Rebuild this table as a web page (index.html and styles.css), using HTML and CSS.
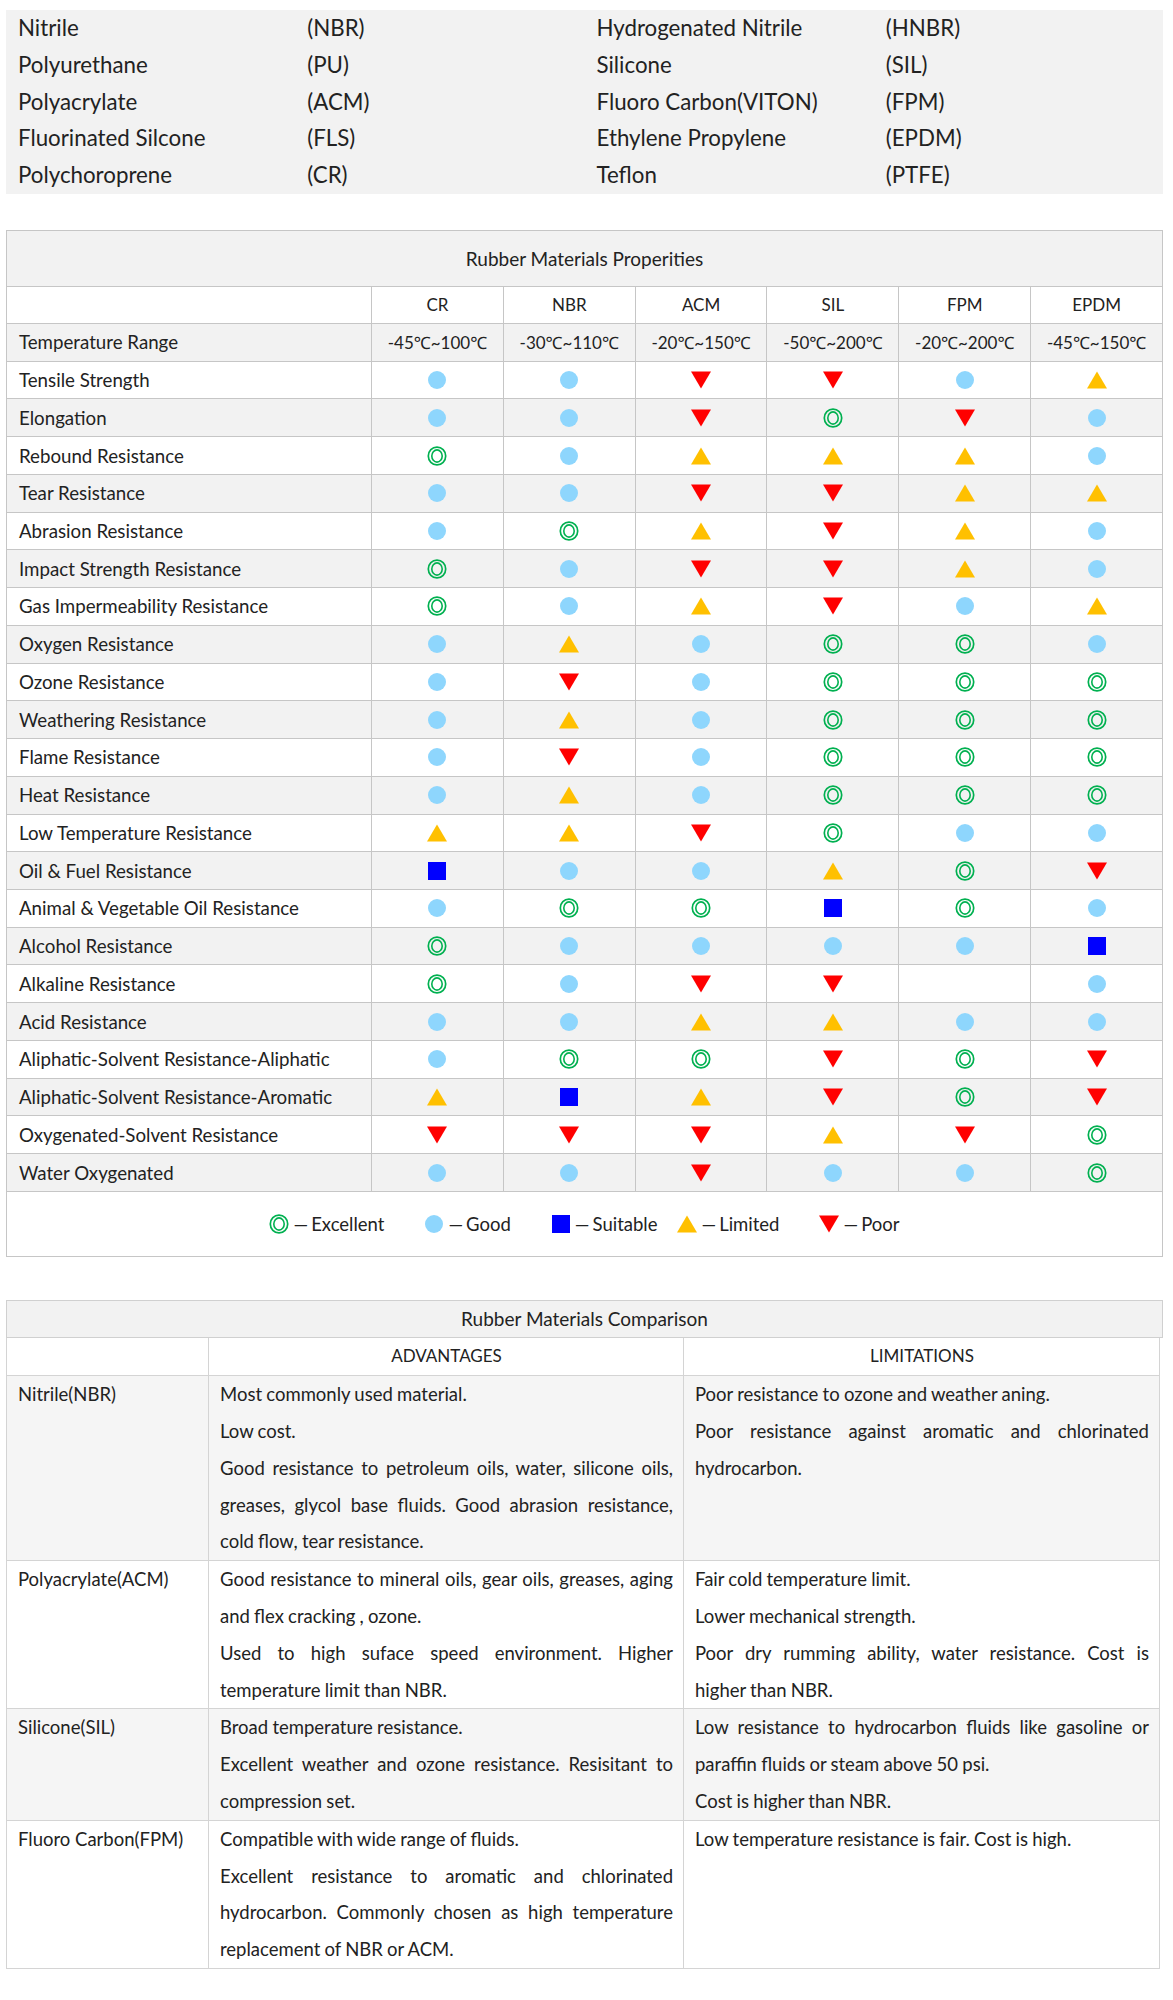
FILE: index.html
```html
<!DOCTYPE html>
<html lang="en">
<head>
<meta charset="utf-8">
<title>Rubber Materials</title>
<link rel="stylesheet" href="styles.css">
</head>
<body>
<svg class="defs" width="0" height="0" aria-hidden="true">
  <defs>
    <symbol id="i-exc" viewBox="0 0 20 20">
      <ellipse cx="10" cy="10" rx="8.7" ry="8.9" fill="none" stroke="#00b050" stroke-width="1.7"/>
      <ellipse cx="10" cy="10" rx="5.2" ry="6.1" fill="none" stroke="#00b050" stroke-width="1.6"/>
    </symbol>
    <symbol id="i-good" viewBox="0 0 20 20">
      <circle cx="10" cy="10" r="9" fill="#8ed6fd"/>
    </symbol>
    <symbol id="i-suit" viewBox="0 0 20 20">
      <rect x="1" y="1" width="18" height="18" fill="#0000ff"/>
    </symbol>
    <symbol id="i-lim" viewBox="0 0 20 20">
      <polygon points="10,1.5 20,18.5 0,18.5" fill="#ffc000"/>
    </symbol>
    <symbol id="i-poor" viewBox="0 0 20 20">
      <polygon points="0,1.5 20,1.5 10,18.5" fill="#ff0000"/>
    </symbol>
  </defs>
</svg>

<div class="page">
  <div class="abbr">
    <div class="abbr-cell">Nitrile</div><div class="abbr-cell">(NBR)</div><div class="abbr-cell">Hydrogenated Nitrile</div><div class="abbr-cell">(HNBR)</div>
    <div class="abbr-cell">Polyurethane</div><div class="abbr-cell">(PU)</div><div class="abbr-cell">Silicone</div><div class="abbr-cell">(SIL)</div>
    <div class="abbr-cell">Polyacrylate</div><div class="abbr-cell">(ACM)</div><div class="abbr-cell">Fluoro Carbon(VITON)</div><div class="abbr-cell">(FPM)</div>
    <div class="abbr-cell">Fluorinated Silcone</div><div class="abbr-cell">(FLS)</div><div class="abbr-cell">Ethylene Propylene</div><div class="abbr-cell">(EPDM)</div>
    <div class="abbr-cell">Polychoroprene</div><div class="abbr-cell">(CR)</div><div class="abbr-cell">Teflon</div><div class="abbr-cell">(PTFE)</div>
  </div>

  <table class="props">
    <colgroup><col class="c-label"><col><col><col><col><col><col></colgroup>
    <tr class="r-title"><td colspan="7">Rubber Materials Properities</td></tr>
    <tr class="r-head"><td></td><td>CR</td><td>NBR</td><td>ACM</td><td>SIL</td><td>FPM</td><td>EPDM</td></tr>
    <tr class="r-data alt r-temp"><td class="lbl">Temperature Range</td><td>-45℃~100℃</td><td>-30℃~110℃</td><td>-20℃~150℃</td><td>-50℃~200℃</td><td>-20℃~200℃</td><td>-45℃~150℃</td></tr>
    <tbody id="prop-body"></tbody>
  </table>
  <table class="legend-table">
    <tr><td>
      <div class="legend">
        <span class="lg-item"><svg class="ic"><use href="#i-exc"/></svg><span class="dash">—</span>Excellent</span>
        <span class="lg-item"><svg class="ic"><use href="#i-good"/></svg><span class="dash">—</span>Good</span>
        <span class="lg-item lg-tight"><svg class="ic"><use href="#i-suit"/></svg><span class="dash">—</span>Suitable</span>
        <span class="lg-item"><svg class="ic"><use href="#i-lim"/></svg><span class="dash">—</span>Limited</span>
        <span class="lg-item lg-last"><svg class="ic"><use href="#i-poor"/></svg><span class="dash">—</span>Poor</span>
      </div>
    </td></tr>
  </table>

  <div class="cmp-title">Rubber Materials Comparison</div>
  <table class="cmp">
    <colgroup><col class="k-name"><col class="k-adv"><col class="k-lim"></colgroup>
    <tr class="cmp-head"><td></td><td>ADVANTAGES</td><td>LIMITATIONS</td></tr>
    <tr class="alt">
      <td class="name">Nitrile(NBR)</td>
      <td class="txt">
        <p>Most commonly used material.</p>
        <p>Low cost.</p>
        <p><span class="ln j">Good resistance to petroleum oils, water, silicone oils,</span><span class="ln j">greases, glycol base fluids. Good abrasion resistance,</span><span class="ln">cold flow, tear resistance.</span></p>
      </td>
      <td class="txt">
        <p>Poor resistance to ozone and weather aning.</p>
        <p><span class="ln j">Poor resistance against aromatic and chlorinated</span><span class="ln">hydrocarbon.</span></p>
      </td>
    </tr>
    <tr>
      <td class="name">Polyacrylate(ACM)</td>
      <td class="txt">
        <p><span class="ln j">Good resistance to mineral oils, gear oils, greases, aging</span><span class="ln">and flex cracking , ozone.</span></p>
        <p><span class="ln j">Used to high suface speed environment. Higher</span><span class="ln">temperature limit than NBR.</span></p>
      </td>
      <td class="txt">
        <p>Fair cold temperature limit.</p>
        <p>Lower mechanical strength.</p>
        <p><span class="ln j">Poor dry rumming ability, water resistance. Cost is</span><span class="ln">higher than NBR.</span></p>
      </td>
    </tr>
    <tr class="alt">
      <td class="name">Silicone(SIL)</td>
      <td class="txt">
        <p>Broad temperature resistance.</p>
        <p><span class="ln j">Excellent weather and ozone resistance. Resisitant to</span><span class="ln">compression set.</span></p>
      </td>
      <td class="txt">
        <p><span class="ln j">Low resistance to hydrocarbon fluids like gasoline or</span><span class="ln">paraffin fluids or steam above 50 psi.</span></p>
        <p>Cost is higher than NBR.</p>
      </td>
    </tr>
    <tr>
      <td class="name">Fluoro Carbon(FPM)</td>
      <td class="txt">
        <p>Compatible with wide range of fluids.</p>
        <p><span class="ln j">Excellent resistance to aromatic and chlorinated</span><span class="ln j">hydrocarbon. Commonly chosen as high temperature</span><span class="ln">replacement of NBR or ACM.</span></p>
      </td>
      <td class="txt">
        <p>Low temperature resistance is fair. Cost is high.</p>
      </td>
    </tr>
  </table>
</div>
<script src="app.js"></script>
</body>
</html>
```

FILE: app.js
```js
var rows = [
  ["Tensile Strength", "G G P P G L"],
  ["Elongation", "G G P E P G"],
  ["Rebound Resistance", "E G L L L G"],
  ["Tear Resistance", "G G P P L L"],
  ["Abrasion Resistance", "G E L P L G"],
  ["Impact Strength Resistance", "E G P P L G"],
  ["Gas Impermeability Resistance", "E G L P G L"],
  ["Oxygen Resistance", "G L G E E G"],
  ["Ozone Resistance", "G P G E E E"],
  ["Weathering Resistance", "G L G E E E"],
  ["Flame Resistance", "G P G E E E"],
  ["Heat Resistance", "G L G E E E"],
  ["Low Temperature Resistance", "L L P E G G"],
  ["Oil & Fuel Resistance", "S G G L E P"],
  ["Animal & Vegetable Oil Resistance", "G E E S E G"],
  ["Alcohol Resistance", "E G G G G S"],
  ["Alkaline Resistance", "E G P P - G"],
  ["Acid Resistance", "G G L L G G"],
  ["Aliphatic-Solvent Resistance-Aliphatic", "G E E P E P"],
  ["Aliphatic-Solvent Resistance-Aromatic", "L S L P E P"],
  ["Oxygenated-Solvent Resistance", "P P P L P E"],
  ["Water Oxygenated", "G G P G G E"]
];
var map = { E: "i-exc", G: "i-good", S: "i-suit", L: "i-lim", P: "i-poor" };
var body = document.getElementById("prop-body");
rows.forEach(function (r, i) {
  var tr = document.createElement("tr");
  tr.className = "r-data" + (i % 2 === 1 ? " alt" : "");
  var html = '<td class="lbl">' + r[0].replace("&", "&amp;") + "</td>";
  r[1].split(" ").forEach(function (k) {
    if (map[k]) {
      html += '<td><svg class="ic"><use href="#' + map[k] + '"/></svg></td>';
    } else {
      html += "<td></td>";
    }
  });
  tr.innerHTML = html;
  body.appendChild(tr);
});
```

FILE: styles.css
```css
* { box-sizing: border-box; }

body {
  margin: 0;
  background: #ffffff;
  color: #222222;
  font-family: Lato, "Open Sans", "Noto Sans", sans-serif;
}

.defs { position: absolute; width: 0; height: 0; overflow: hidden; }

.page {
  width: 1163px;
  padding: 10px 0 40px 6px;
}

/* abbreviation list */
.abbr {
  display: grid;
  grid-template-columns: repeat(4, 1fr);
  grid-auto-rows: 36.8px;
  background: #f2f2f2;
  font-size: 22.3px;
  line-height: 36.8px;
}
.abbr-cell { padding-left: 12px; white-space: nowrap; }

/* properties table */
.props,
.legend-table {
  width: 1157px;
  border-collapse: collapse;
  table-layout: fixed;
  font-size: 17px;
}
.props { margin-top: 36px; }
.props td,
.legend-table td {
  border: 1px solid #c6c6c6;
  padding: 0;
  text-align: center;
  vertical-align: middle;
  white-space: nowrap;
}
.c-label { width: 365px; }

.r-title td { height: 56px; background: #f2f2f2; font-size: 19px; }
.r-head td { height: 37px; background: #ffffff; }
.r-data td { height: 37.74px; background: #ffffff; }
.r-data.alt td { background: #f2f2f2; }
.props td.lbl { text-align: left; padding-left: 12px; font-size: 18.7px; }

.ic { width: 20px; height: 20px; display: inline-block; vertical-align: middle; }
.props .ic { display: block; margin: 0 auto; }

.legend-table td { height: 65px; border-top: none; }
.legend {
  display: flex;
  justify-content: center;
  align-items: center;
  font-size: 18.5px;
}
.lg-item { display: inline-flex; align-items: center; margin-right: 40px; }
.lg-item.lg-tight { margin-right: 20px; }
.lg-item.lg-last { margin-right: 0; }
.dash { margin: 0 3px 0 4px; }

/* comparison table */
.cmp-title {
  width: 1157px;
  margin-top: 43px;
  height: 38px;
  line-height: 36px;
  text-align: center;
  background: #f2f2f2;
  border: 1px solid #d0d0d0;
  font-size: 19px;
}
.cmp {
  width: 1154px;
  border-collapse: collapse;
  table-layout: fixed;
  font-size: 18.5px;
}
.k-name { width: 202px; }
.k-adv { width: 475px; }
.cmp td {
  border: 1px solid #d4d4d4;
  vertical-align: top;
  line-height: 36.8px;
  padding: 0 10px 0 11px;
}
.cmp tr:first-child td { border-top: none; }
.cmp-head td { text-align: center; height: 37px; vertical-align: middle; font-size: 17px; }
.cmp tr.alt td { background: #f5f5f5; }
.cmp p { margin: 0; text-align: justify; }
.cmp .txt { word-spacing: -0.5px; }
.ln { display: block; }
.ln.j { text-align: justify; text-align-last: justify; }
```
